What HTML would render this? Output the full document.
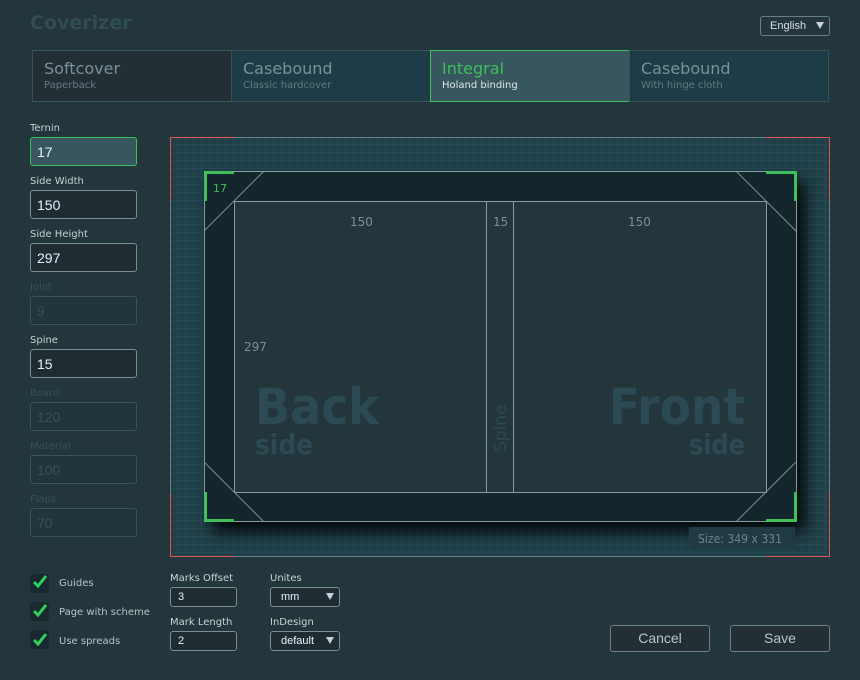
<!DOCTYPE html>
<html><head><meta charset="utf-8"><style>
*{margin:0;padding:0;box-sizing:border-box}
body{width:860px;height:680px;background:#22363c;font-family:"DejaVu Sans","Liberation Sans",sans-serif;position:relative;overflow:hidden;color:#aab8bc}
.abs{position:absolute}
.title{left:30px;top:12px;font-size:19px;font-weight:bold;color:#304d56}
.lang{left:760px;top:16px;width:70px;height:20px;border:1px solid #6a7e84;border-radius:3px;font-size:11px;color:#dde;padding:3px 0 0 9px;background:#22363c;font-family:"Liberation Sans",sans-serif}
.tri{position:absolute;right:5px;top:5px;width:0;height:0;border-left:4px solid transparent;border-right:4px solid transparent;border-top:7px solid #ccd}
.tab{top:50px;height:52px;border:1px solid #37555d;padding:8px 0 0 11px}
.tab b{display:block;font-weight:normal;font-size:16px;color:#7b9198}
.tab i{display:block;font-style:normal;font-size:10px;color:#627a80;margin-top:2px}
.lbl{left:30px;font-size:10px;color:#c8d2d4}
.in{left:30px;width:107px;height:29px;border:1px solid #7d8e93;border-radius:3px;background:#1f2d33;color:#eef;font-family:"Liberation Sans",sans-serif;font-size:14px;padding:6px 0 0 6px}
.in.d{border-color:#37555d;background:#21363c;color:#36505a}
.cb{left:30px;width:19px;height:19px;background:#182a30;border-radius:3px}
.cbl{left:59px;font-size:10px;color:#b8c4c8}
.sm{width:67px;height:20px;border:1px solid #7d8e93;border-radius:3px;background:#1f2d33;font-family:"Liberation Sans",sans-serif;font-size:11px;color:#eef;padding:3px 0 0 7px}
.btn{top:625px;width:100px;height:27px;border:1px solid #6e8288;border-radius:3px;background:#232f35;color:#b8c8cc;font-family:"Liberation Sans",sans-serif;font-size:14px;text-align:center;line-height:25px}
</style></head><body>
<div class="abs title">Coverizer</div>
<div class="abs lang">English<span class="tri"></span></div>

<div class="abs tab" style="left:32px;width:200px;background:#232f35"><b>Softcover</b><i>Paperback</i></div>
<div class="abs tab" style="left:231px;width:200px;background:#1d3c47"><b>Casebound</b><i>Classic hardcover</i></div>
<div class="abs tab" style="left:430px;width:200px;background:#37565e;border-color:#3fc05a"><b style="color:#3dc05c">Integral</b><i style="color:#dfe8ea">Holand binding</i></div>
<div class="abs tab" style="left:629px;width:200px;background:#1d3c47"><b>Casebound</b><i>With hinge cloth</i></div>

<div class="abs lbl" style="top:123px">Ternin</div>
<div class="abs in" style="top:137px;background:#37565e;border-color:#3fc05a">17</div>
<div class="abs lbl" style="top:176px">Side Width</div>
<div class="abs in" style="top:190px">150</div>
<div class="abs lbl" style="top:229px">Side Height</div>
<div class="abs in" style="top:243px">297</div>
<div class="abs lbl" style="top:282px;color:#36505a">Joint</div>
<div class="abs in d" style="top:296px">9</div>
<div class="abs lbl" style="top:335px">Spine</div>
<div class="abs in" style="top:349px">15</div>
<div class="abs lbl" style="top:388px;color:#36505a">Board</div>
<div class="abs in d" style="top:402px">120</div>
<div class="abs lbl" style="top:441px;color:#36505a">Material</div>
<div class="abs in d" style="top:455px">100</div>
<div class="abs lbl" style="top:494px;color:#36505a">Flaps</div>
<div class="abs in d" style="top:508px">70</div>

<svg class="abs" style="left:170px;top:137px" width="660" height="420" viewBox="0 0 660 420" font-family="DejaVu Sans, sans-serif">
<defs>
<pattern id="g" width="8" height="8" patternUnits="userSpaceOnUse"><rect width="8" height="8" fill="#1f3f49"/><path d="M8 0V8M0 8H8" stroke="#2d5360" stroke-width="1"/></pattern>
<filter id="sh" x="-10%" y="-10%" width="130%" height="130%"><feDropShadow dx="8" dy="10" stdDeviation="8" flood-color="#000" flood-opacity="0.9"/></filter>
<filter id="ish"><feGaussianBlur stdDeviation="5"/></filter>
<clipPath id="ic"><rect x="64" y="64" width="532" height="291"/></clipPath>
</defs>
<rect x="0" y="0" width="660" height="420" fill="url(#g)"/>
<rect x="0.5" y="0.5" width="659" height="419" fill="none" stroke="#6a8188"/>
<path d="M0.5 64V0.5H64M596 0.5H659.5V64M659.5 356V419.5H596M64 419.5H0.5V356" fill="none" stroke="#e05555"/>
<rect x="34" y="34" width="593" height="351" fill="#13262c" filter="url(#sh)"/>
<rect x="34.5" y="34.5" width="592" height="350" fill="#13262c" stroke="#8a9ca0"/>
<rect x="64" y="64" width="532" height="291" fill="#22363c"/>
<g clip-path="url(#ic)"><rect x="44" y="44" width="572" height="331" fill="none" stroke="#0a1518" stroke-width="22" filter="url(#ish)"/></g>
<rect x="64.5" y="64.5" width="532" height="291" fill="none" stroke="#8a9ca0"/>
<path d="M316.5 64V355M343.5 64V355" stroke="#8a9ca0"/>
<path d="M34 94L94 34M566 34L626 94M626 325L566 385M34 325L94 385" stroke="#7d9094" fill="none"/>
<path d="M35.5 64V35.5H64M596 35.5H625.5V64M625.5 355V383.5H596M64 383.5H35.5V355" stroke="#3fc05a" stroke-width="3" fill="none"/>
<text x="43" y="55" font-size="11" fill="#3fc05a">17</text>
<text x="180" y="89" font-size="12" fill="#7d9094">150</text>
<text x="323" y="89" font-size="12" fill="#7d9094">15</text>
<text x="458" y="89" font-size="12" fill="#7d9094">150</text>
<text x="74" y="214" font-size="12" fill="#7d9094">297</text>
<text x="85" y="287" font-size="50" font-weight="bold" fill="#2c4a54" textLength="124" lengthAdjust="spacingAndGlyphs">Back</text>
<text x="85" y="317" font-size="28" font-weight="bold" fill="#2c4a54" textLength="58" lengthAdjust="spacingAndGlyphs">side</text>
<text x="575" y="287" font-size="50" font-weight="bold" fill="#2c4a54" text-anchor="end" textLength="136" lengthAdjust="spacingAndGlyphs">Front</text>
<text x="575" y="317" font-size="28" font-weight="bold" fill="#2c4a54" text-anchor="end" textLength="56" lengthAdjust="spacingAndGlyphs">side</text>
<text transform="translate(336 315) rotate(-90)" font-size="17" fill="#2c4a54">Spine</text>
<rect x="519" y="390" width="106" height="22" fill="#1f3a42"/>
<text x="528" y="406" font-size="12" fill="#6f8488" textLength="84" lengthAdjust="spacingAndGlyphs">Size: 349 x 331</text>
</svg>

<div class="abs cb" style="top:574px"></div><div class="abs cb" style="top:602px"></div><div class="abs cb" style="top:630px"></div>
<svg class="abs" style="left:30px;top:570px" width="22" height="80"><g stroke="#2ed15a" stroke-width="3" fill="none"><path d="M4 12L8 16L16 6"/><path d="M4 41L8 45L16 35"/><path d="M4 70L8 74L16 64"/></g></svg>
<div class="abs cbl" style="top:578px">Guides</div>
<div class="abs cbl" style="top:607px">Page with scheme</div>
<div class="abs cbl" style="top:636px">Use spreads</div>

<div class="abs lbl" style="left:170px;top:573px">Marks Offset</div>
<div class="abs sm" style="left:170px;top:587px">3</div>
<div class="abs lbl" style="left:170px;top:617px">Mark Length</div>
<div class="abs sm" style="left:170px;top:631px">2</div>
<div class="abs lbl" style="left:270px;top:573px">Unites</div>
<div class="abs sm" style="left:270px;top:587px;width:70px;padding-left:10px">mm<span class="tri"></span></div>
<div class="abs lbl" style="left:270px;top:617px">InDesign</div>
<div class="abs sm" style="left:270px;top:631px;width:70px;padding-left:10px">default<span class="tri"></span></div>

<div class="abs btn" style="left:610px">Cancel</div>
<div class="abs btn" style="left:730px">Save</div>
</body></html>
